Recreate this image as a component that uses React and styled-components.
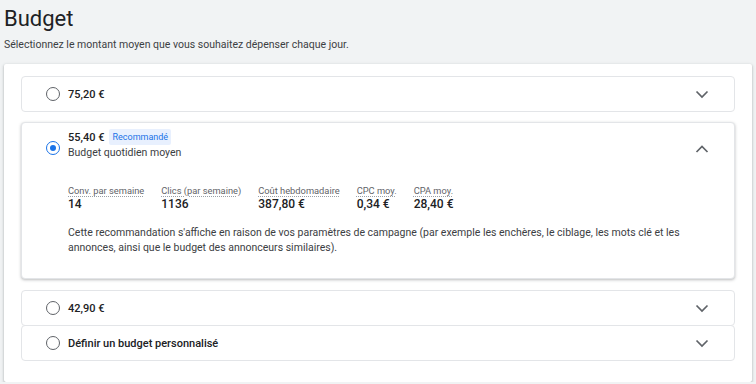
import React from "react";
import styled, { createGlobalStyle } from "styled-components";

const GlobalStyle = createGlobalStyle`
	html, body {
		margin: 0;
		padding: 0;
		background: #f1f3f4;
		font-family: Roboto, "Liberation Sans", Arial, sans-serif;
		color: #202124;
	}
`;

const options = [
	{ id: "a", label: "75,20 €" },
	{ id: "b", label: "55,40 €", recommended: true },
	{ id: "c", label: "42,90 €" },
	{ id: "d", label: "Définir un budget personnalisé" },
];

const stats = [
	{ label: "Conv. par semaine", value: "14" },
	{ label: "Clics (par semaine)", value: "1136" },
	{ label: "Coût hebdomadaire", value: "387,80 €" },
	{ label: "CPC moy.", value: "0,34 €" },
	{ label: "CPA moy.", value: "28,40 €" },
];

const Chevron = ({ up }) => (
	<ChevronBox up={up}>
		<svg width="24" height="24" viewBox="0 0 24 24" fill="none" stroke="#5f6368" strokeWidth="1.7">
			{up ? <path d="M6.5 15l5.5-5.5 5.5 5.5" /> : <path d="M6.5 9.5l5.5 5.5 5.5-5.5" />}
		</svg>
	</ChevronBox>
);

const App = () => {
	const selected = "b";

	return (
		<Page>
			<GlobalStyle />
			<Title>Budget</Title>
			<Subtitle>Sélectionnez le montant moyen que vous souhaitez dépenser chaque jour.</Subtitle>
			<Card>
				<Panel>
					<Header>
						<Radio />
						<Amount>{options[0].label}</Amount>
						<Chevron />
					</Header>
				</Panel>

				<Panel open>
					<Header open>
						<Radio checked />
						<HeadText>
							<AmountRow>
								<Amount>{options[1].label}</Amount>
								<Badge>Recommandé</Badge>
							</AmountRow>
							<Sub>Budget quotidien moyen</Sub>
						</HeadText>
						<Chevron up />
					</Header>
					<Body>
						<Stats>
							{stats.map((s) => (
								<Stat key={s.label}>
									<StatLabel>{s.label}</StatLabel>
									<StatValue>{s.value}</StatValue>
								</Stat>
							))}
						</Stats>
						<Note>
							Cette recommandation s'affiche en raison de vos paramètres de campagne (par exemple les
							enchères, le ciblage, les mots clé et les annonces, ainsi que le budget des annonceurs
							similaires).
						</Note>
					</Body>
				</Panel>

				<Group>
					{options.slice(2).map((o) => (
						<Panel key={o.id} grouped>
							<Header>
								<Radio checked={selected === o.id} />
								<Amount>{o.label}</Amount>
								<Chevron />
							</Header>
						</Panel>
					))}
				</Group>
			</Card>
		</Page>
	);
};

export default App;

const Page = styled.div`
	padding: 0 4px;
`;

const Title = styled.h1`
	margin: 0;
	padding-top: 5px;
	font-size: 22px;
	font-weight: 400;
	line-height: 28px;
	color: #202124;
`;

const Subtitle = styled.p`
	margin: 5px 0 0;
	font-size: 10.5px;
	line-height: 14px;
	color: #3c4043;
`;

const Card = styled.div`
	margin-top: 12px;
	width: 748px;
	box-sizing: border-box;
	background: #fff;
	border-radius: 2px;
	box-shadow: 0 1px 2px rgba(60, 64, 67, 0.3), 0 1px 3px 1px rgba(60, 64, 67, 0.1);
	padding: 12px 17px 21px;
	display: flex;
	flex-direction: column;
	gap: 11px;
`;

const Group = styled.div`
	display: flex;
	flex-direction: column;
`;

const Panel = styled.div`
	background: #fff;
	border: 1px solid #e3e5e8;
	border-radius: 4px;
	box-shadow: ${(p) => (p.open ? "0 1px 3px rgba(60, 64, 67, 0.35)" : "none")};
	${(p) => (p.grouped ? "& + & { margin-top: -1px; }" : "")}
`;

const Header = styled.div`
	display: flex;
	height: ${(p) => (p.open ? "48px" : "34px")};
	padding: 0 20px 0 24px;
	padding-top: ${(p) => (p.open ? "6px" : "0")};
	box-sizing: border-box;
	align-items: ${(p) => (p.open ? "flex-start" : "center")};

	& > :first-child {
		margin-top: ${(p) => (p.open ? "12px" : "0")};
	}
`;

const Radio = styled.span`
	width: 14px;
	height: 14px;
	box-sizing: border-box;
	border-radius: 50%;
	border: 1.6px solid ${(p) => (p.checked ? "#1a73e8" : "#5f6368")};
	margin-right: 8px;
	flex-shrink: 0;
	display: flex;
	align-items: center;
	justify-content: center;

	&::after {
		content: "";
		width: 6px;
		height: 6px;
		border-radius: 50%;
		background: #1a73e8;
		display: ${(p) => (p.checked ? "block" : "none")};
	}
`;

const HeadText = styled.div`
	display: flex;
	flex-direction: column;
`;

const AmountRow = styled.div`
	display: flex;
	align-items: center;
	gap: 5px;
	height: 16px;
`;

const Amount = styled.span`
	font-size: 11px;
	font-weight: 500;
	color: #202124;
	flex: 1;
	${AmountRow} & {
		flex: none;
	}
`;

const Badge = styled.span`
	background: #e8f0fe;
	color: #1a73e8;
	font-size: 9px;
	line-height: 16px;
	padding: 0 3px;
	border-radius: 2px;
`;

const Sub = styled.span`
	font-size: 10.5px;
	line-height: 16px;
	color: #3c4043;
`;

const ChevronBox = styled.span`
	display: flex;
	margin-left: auto;
	margin-top: ${(p) => (p.up ? "8px" : "0")};
`;

const Body = styled.div`
	padding: 13px 24px 23px 46px;
`;

const Stats = styled.div`
	display: flex;
	gap: 17px;
`;

const Stat = styled.div`
	display: flex;
	flex-direction: column;
`;

const StatLabel = styled.span`
	font-size: 9.3px;
	line-height: 13px;
	color: #5f6368;
	text-decoration: underline dotted #9aa0a6;
	text-underline-offset: 2px;
`;

const StatValue = styled.span`
	font-size: 12px;
	font-weight: 500;
	line-height: 15px;
	color: #202124;
`;

const Note = styled.p`
	margin: 13px 0 0;
	font-size: 10.5px;
	line-height: 15px;
	color: #3c4043;
	max-width: 630px;
`;
